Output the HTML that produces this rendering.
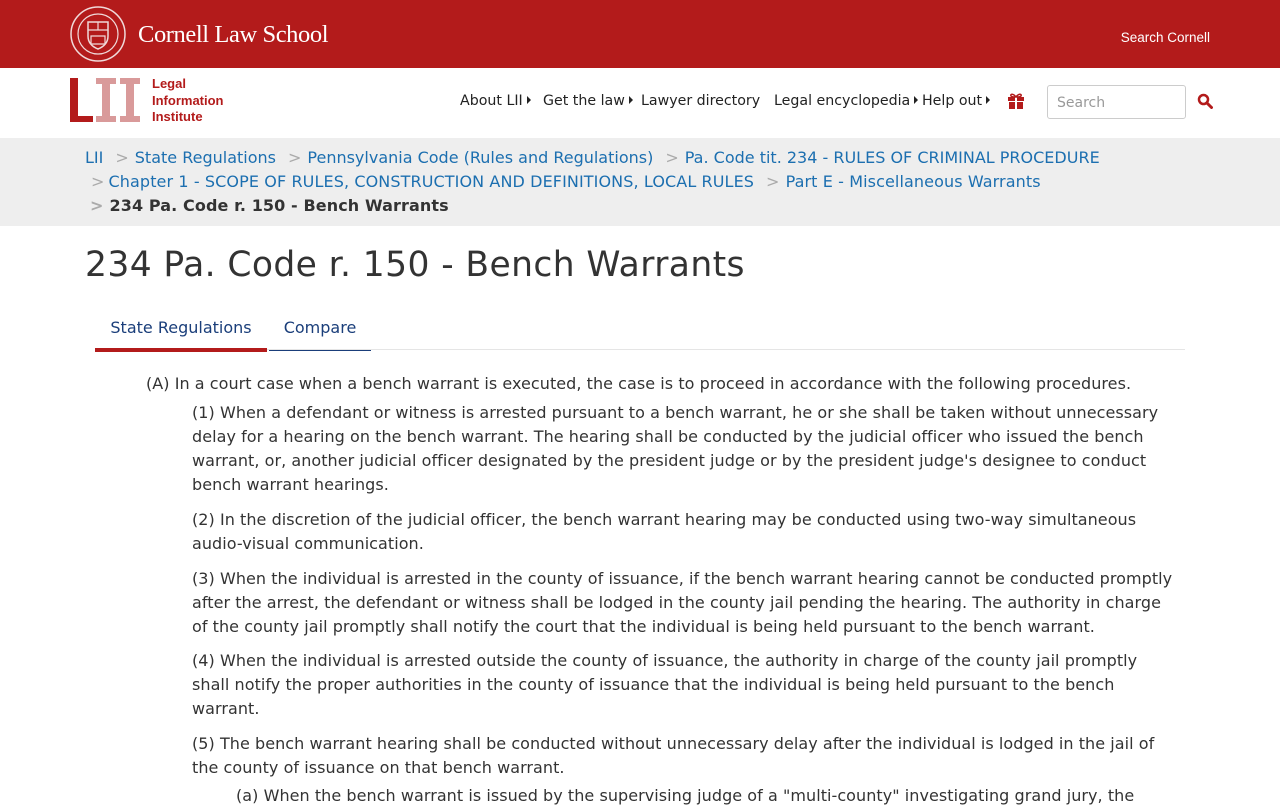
<!DOCTYPE html>
<html><head><meta charset="utf-8"><style>
*{margin:0;padding:0;box-sizing:border-box}
body{width:1280px;height:800px;overflow:hidden;background:#fff;font-family:"DejaVu Sans","Liberation Sans",sans-serif;color:#333}
.top{height:68px;background:#b31b1b;position:relative}
.top .name{position:absolute;left:138px;top:21px;font-family:"Liberation Serif",serif;font-size:24.5px;color:#fff;letter-spacing:-0.4px}
.top .sc{position:absolute;right:70px;top:30px;color:#fff;font-family:"Liberation Sans",sans-serif;font-size:13.5px}
.nav{height:70px;position:relative}
.lii{position:absolute;left:70px;top:78px}
.lii .t{position:absolute;left:82px;top:-2px;color:#b31b1b;font-family:"Liberation Sans",sans-serif;font-weight:bold;font-size:13px;line-height:16.5px;white-space:nowrap}
.menu{position:absolute;top:93px;left:460px;font-size:14.2px;color:#222;white-space:nowrap}
.menu span{position:absolute;top:0}
.tri{display:inline-block;width:0;height:0;border-left:4px solid #222;border-top:4px solid transparent;border-bottom:4px solid transparent;margin-left:4px;vertical-align:1px}
.search{position:absolute;left:1047px;top:85px;width:139px;height:34px;border:1px solid #ccc;border-radius:3px;font-size:14px;color:#999;padding:9px 9px}
.bc{position:absolute;top:138px;left:0;width:1280px;height:88px;background:#eee;font-size:16px;line-height:24px;color:#1c6fb0;padding:8px 0 0 85px;white-space:nowrap}
.bc .g{color:#aaa;margin:0 6px 0 12px}
.bc b{color:#333}
h1{position:absolute;left:85px;top:245px;font-weight:normal;font-size:34.5px;color:#333;white-space:nowrap;letter-spacing:0.4px}
.tabs{position:absolute;top:316px;left:95px;width:1090px;height:34px;border-bottom:1px solid #e5e5e5}
.tab{position:absolute;top:0;height:35px;font-size:16px;color:#1a3e7a;text-align:center;padding-top:2px}
.body{position:absolute;top:372px;left:0;font-size:16px;line-height:24px;white-space:nowrap;color:#333;letter-spacing:0.05px}
.body p{position:absolute}
</style></head><body>
<div class="top">
<svg style="position:absolute;left:70px;top:6px" width="56" height="56" viewBox="0 0 56 56"><circle cx="28" cy="28" r="27" fill="none" stroke="#f0d9d9" stroke-width="1.5"/><circle cx="28" cy="28" r="20" fill="none" stroke="#f0d9d9" stroke-width="1.2"/><path d="M18 16h20v14c0 7-5 11-10 13-5-2-10-6-10-13z" fill="none" stroke="#f0d9d9" stroke-width="1.5"/><path d="M18 24h20M28 16v8M21 30h14v8h-14z" stroke="#f0d9d9" fill="none" stroke-width="1.2"/></svg>
<div class="name">Cornell Law School</div>
<div class="sc">Search Cornell</div>
</div>
<div class="nav"></div>
<div class="lii">
<svg width="72" height="46" viewBox="0 0 72 46"><path d="M0 0h8v38h15v6H0z" fill="#b31b1b"/><path d="M26 0h20v6h-6v32h6v6H26v-6h6V6h-6z" fill="#d99a9a"/><path d="M50 0h20v6h-6v32h6v6H50v-6h6V6h-6z" fill="#d99a9a"/></svg>
<div class="t">Legal<br>Information<br>Institute</div>
</div>
<div class="menu">
<span style="left:0">About LII<i class="tri"></i></span>
<span style="left:83px">Get the law<i class="tri"></i></span>
<span style="left:181px">Lawyer directory</span>
<span style="left:314px">Legal encyclopedia<i class="tri"></i></span>
<span style="left:462px">Help out<i class="tri"></i></span>
</div>
<svg style="position:absolute;left:1007px;top:93px" width="18" height="16" viewBox="0 0 18 16"><path d="M1 4h16v4H1zM2 9h14v7H2z" fill="#b31b1b"/><path d="M8 4h2v12H8z" fill="#fff"/><path d="M9 4C6 0 3 1 4 3 5 4 9 4 9 4 9 4 13 4 14 3 15 1 12 0 9 4" fill="none" stroke="#b31b1b" stroke-width="1.5"/></svg>
<div class="search">Search</div>
<svg style="position:absolute;left:1197px;top:93px" width="16" height="16" viewBox="0 0 16 16"><circle cx="6.5" cy="6.5" r="4.5" fill="none" stroke="#b31b1b" stroke-width="2.5"/><path d="M10 10l4.5 4.5" stroke="#b31b1b" stroke-width="3" stroke-linecap="round"/></svg>
<div class="bc">
<div>LII<span class="g">&gt;</span>State Regulations<span class="g">&gt;</span>Pennsylvania Code (Rules and Regulations)<span class="g">&gt;</span>Pa. Code tit. 234 - RULES OF CRIMINAL PROCEDURE</div>
<div style="margin-left:6px;letter-spacing:0.1px"><span class="g" style="margin-left:0;margin-right:4px">&gt;</span>Chapter 1 - SCOPE OF RULES, CONSTRUCTION AND DEFINITIONS, LOCAL RULES<span class="g">&gt;</span>Part E - Miscellaneous Warrants</div>
<div style="margin-left:5px;letter-spacing:0.1px"><span class="g" style="margin-left:0;font-weight:bold">&gt;</span><b>234 Pa. Code r. 150 - Bench Warrants</b></div>
</div>
<h1>234 Pa. Code r. 150 - Bench Warrants</h1>
<div class="tabs">
<div class="tab" style="left:0;width:172px;border-bottom:4px solid #b31b1b;height:36px">State Regulations</div>
<div class="tab" style="left:174px;width:102px;border-bottom:1px solid #1a3e7a">Compare</div>
</div>
<div class="body">
<p style="left:146px;top:0">(A) In a court case when a bench warrant is executed, the case is to proceed in accordance with the following procedures.</p>
<p style="left:192px;top:29px">(1) When a defendant or witness is arrested pursuant to a bench warrant, he or she shall be taken without unnecessary<br>delay for a hearing on the bench warrant. The hearing shall be conducted by the judicial officer who issued the bench<br>warrant, or, another judicial officer designated by the president judge or by the president judge's designee to conduct<br>bench warrant hearings.</p>
<p style="left:192px;top:136px">(2) In the discretion of the judicial officer, the bench warrant hearing may be conducted using two-way simultaneous<br>audio-visual communication.</p>
<p style="left:192px;top:195px">(3) When the individual is arrested in the county of issuance, if the bench warrant hearing cannot be conducted promptly<br>after the arrest, the defendant or witness shall be lodged in the county jail pending the hearing. The authority in charge<br>of the county jail promptly shall notify the court that the individual is being held pursuant to the bench warrant.</p>
<p style="left:192px;top:277px">(4) When the individual is arrested outside the county of issuance, the authority in charge of the county jail promptly<br>shall notify the proper authorities in the county of issuance that the individual is being held pursuant to the bench<br>warrant.</p>
<p style="left:192px;top:360px">(5) The bench warrant hearing shall be conducted without unnecessary delay after the individual is lodged in the jail of<br>the county of issuance on that bench warrant.</p>
<p style="left:236px;top:412px">(a) When the bench warrant is issued by the supervising judge of a "multi-county" investigating grand jury, the</p>
</div>
</body></html>
